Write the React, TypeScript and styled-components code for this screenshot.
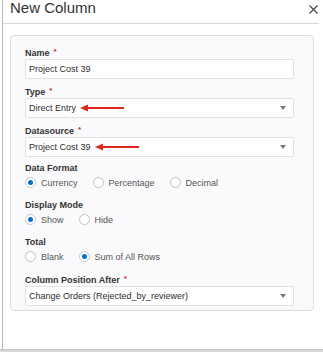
import React from "react"
import styled, { createGlobalStyle } from "styled-components"

const GlobalStyle = createGlobalStyle`
  html, body {
    margin: 0;
    padding: 0;
    background: #ffffff;
    font-family: "Liberation Sans", Arial, Helvetica, sans-serif;
  }
`

const Page = styled.div`
  width: 323px;
  height: 352px;
  overflow: hidden;
  background: #ffffff;
  display: flex;
  flex-direction: column;
`

const Dialog = styled.div`
  margin-left: 2px;
  width: 316px;
  height: 349px;
  flex: none;
  background: #ffffff;
  border-left: 1px solid #b8b8b8;
  display: flex;
  flex-direction: column;
`

// grey shadow strip under the dialog
const Shade = styled.div`
  flex: 1;
  background: linear-gradient(#c6c6c6, #e0e0e0);
`

const Header = styled.div`
  height: 23px;
  border-bottom: 1px solid #d8d8d8;
  display: flex;
  align-items: flex-start;
  justify-content: space-between;
  padding: 0 1px 0 7px;
`

const Title = styled.div`
  font-size: 15px;
  line-height: 15px;
  color: #333333;
`

const Close = styled.button`
  border: 0;
  background: none;
  padding: 0;
  margin-top: 5px;
  width: 9px;
  height: 9px;
  display: flex;
`

const Body = styled.div`
  padding: 11px 5px 0 7px;
`

const Card = styled.div`
  border: 1px solid #dcdcde;
  border-radius: 4px;
  background: #fafafc;
  padding: 10px 19px 4px 14px;
`

const Field = styled.div<{ $gap: number }>`
  margin-bottom: ${(p) => p.$gap}px;
`

const Label = styled.div`
  font-size: 9px;
  line-height: 11px;
  font-weight: bold;
  color: #333333;
`

const Star = styled.span`
  color: #d0202a;
  font-size: 8px;
  margin-left: 4px;
  vertical-align: 2px;
`

const Input = styled.div`
  height: 20px;
  box-sizing: border-box;
  border: 1px solid #e2e2e4;
  border-radius: 2px;
  background: #ffffff;
  display: flex;
  align-items: center;
  padding: 0 7px 0 3px;
  font-size: 9px;
  color: #2e2e2e;
`

const Value = styled.span`
  flex: 1;
  display: flex;
  align-items: center;
  white-space: nowrap;
`

const Caret = styled.span`
  width: 0;
  height: 0;
  border-left: 3px solid transparent;
  border-right: 3px solid transparent;
  border-top: 4px solid #7a7a7a;
`

const RadioRow = styled.div`
  height: 17px;
  display: flex;
  align-items: center;
  gap: 15px;
`

const Option = styled.label`
  display: flex;
  align-items: center;
  gap: 5px;
  font-size: 9px;
  color: #555555;
`

const Circle = styled.span<{ $on: boolean }>`
  width: 11px;
  height: 11px;
  box-sizing: border-box;
  border-radius: 50%;
  border: 1px solid ${(p) => (p.$on ? "#c4c9d0" : "#c3c3c3")};
  background: #ffffff;
  display: flex;
  align-items: center;
  justify-content: center;
  &::after {
    content: "";
    width: 5px;
    height: 5px;
    border-radius: 50%;
    background: ${(p) => (p.$on ? "#0a6ec8" : "transparent")};
  }
`

const Arrow = () => (
  <svg width="44" height="8" viewBox="0 0 44 8" style={{ marginLeft: 4 }}>
    <line x1="6" y1="4" x2="44" y2="4" stroke="#e0281f" strokeWidth="2" />
    <polygon points="0,4 8,0.5 8,7.5" fill="#e0281f" />
  </svg>
)

const Radio = ({ label, on }: { label: string; on?: boolean }) => (
  <Option>
    <Circle $on={!!on} />
    {label}
  </Option>
)

const Select = ({ value, arrow }: { value: string; arrow?: boolean }) => (
  <Input>
    <Value>
      {value}
      {arrow && <Arrow />}
    </Value>
    <Caret />
  </Input>
)

const App: React.FC = () => {
  return (
    <Page>
      <GlobalStyle />
      <Dialog>
        <Header>
          <Title>New Column</Title>
          <Close>
            <svg width="9" height="9" viewBox="0 0 9 9">
              <path d="M0.5 0.5 L8.5 8.5 M8.5 0.5 L0.5 8.5" stroke="#4a4a4a" strokeWidth="1.2" />
            </svg>
          </Close>
        </Header>
        <Body>
          <Card>
            <Field $gap={6}>
              <Label>
                Name<Star>*</Star>
              </Label>
              <Input>
                <Value>Project Cost 39</Value>
              </Input>
            </Field>
            <Field $gap={6}>
              <Label>
                Type<Star>*</Star>
              </Label>
              <Select value="Direct Entry" arrow />
            </Field>
            <Field $gap={6}>
              <Label>
                Datasource<Star>*</Star>
              </Label>
              <Select value="Project Cost 39" arrow />
            </Field>
            <Field $gap={9}>
              <Label>Data Format</Label>
              <RadioRow>
                <Radio label="Currency" on />
                <Radio label="Percentage" />
                <Radio label="Decimal" />
              </RadioRow>
            </Field>
            <Field $gap={9}>
              <Label>Display Mode</Label>
              <RadioRow>
                <Radio label="Show" on />
                <Radio label="Hide" />
              </RadioRow>
            </Field>
            <Field $gap={8}>
              <Label>Total</Label>
              <RadioRow>
                <Radio label="Blank" />
                <Radio label="Sum of All Rows" on />
              </RadioRow>
            </Field>
            <Field $gap={0}>
              <Label>
                Column Position After<Star>*</Star>
              </Label>
              <Select value="Change Orders (Rejected_by_reviewer)" />
            </Field>
          </Card>
        </Body>
      </Dialog>
      <Shade />
    </Page>
  )
}

export default App
